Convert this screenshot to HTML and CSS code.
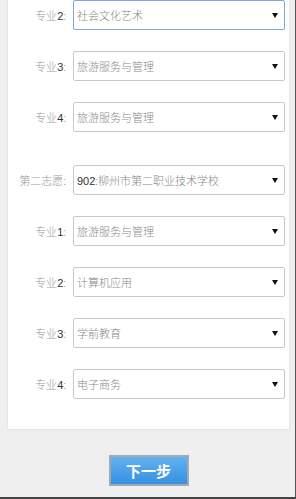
FILE: index.html
```html
<!DOCTYPE html>
<html lang="zh-CN">
  <head>
    <meta charset="UTF-8" />
    <meta name="viewport" content="width=device-width, initial-scale=1.0" />
    <title>志愿填报</title>
    <link rel="stylesheet" href="styles.css">
  </head>
  <body>
    <div class="page">
      <!-- 志愿表单 -->
      <div class="panel">
        <div class="group">
          <div class="row">
            <label class="row-label">专业<span class="num">2</span>:</label>
            <div class="select focus">社会文化艺术<i class="arrow"></i></div>
          </div>
          <div class="row">
            <label class="row-label">专业<span class="num">3</span>:</label>
            <div class="select">旅游服务与管理<i class="arrow"></i></div>
          </div>
          <div class="row">
            <label class="row-label">专业<span class="num">4</span>:</label>
            <div class="select">旅游服务与管理<i class="arrow"></i></div>
          </div>
        </div>

        <div class="group">
          <div class="row">
            <label class="row-label">第二志愿:</label>
            <div class="select"><span class="num">902</span>:柳州市第二职业技术学校<i class="arrow"></i></div>
          </div>
          <div class="row">
            <label class="row-label">专业<span class="num">1</span>:</label>
            <div class="select">旅游服务与管理<i class="arrow"></i></div>
          </div>
          <div class="row">
            <label class="row-label">专业<span class="num">2</span>:</label>
            <div class="select">计算机应用<i class="arrow"></i></div>
          </div>
          <div class="row">
            <label class="row-label">专业<span class="num">3</span>:</label>
            <div class="select">学前教育<i class="arrow"></i></div>
          </div>
          <div class="row">
            <label class="row-label">专业<span class="num">4</span>:</label>
            <div class="select">电子商务<i class="arrow"></i></div>
          </div>
        </div>
      </div>

      <div class="actions">
        <button class="btn-next" type="button">下一步</button>
      </div>
    </div>
  </body>
</html>
```

FILE: styles.css
```css
/* 页面整体 */
body {
  margin: 0;
  font-family: "Noto Sans CJK SC", sans-serif;
  background-color: #efefef;
}
.page {
  box-sizing: border-box;
  height: 499px;
  border-right: 1px solid #555;
  border-bottom: 2px solid #444;
  overflow: hidden;
}

/* 白色面板 */
.panel {
  margin: 0 5px 0 7px;
  padding: 0 4px 30px 0;
  background-color: #fff;
  border: 1px solid #e6e6e6;
  border-top: 0;
}
.group + .group {
  margin-top: 33px;
}
.row {
  display: flex;
  align-items: center;
  height: 30px;
}
.row + .row {
  margin-top: 21px;
}
.row-label {
  width: 65px;
  padding-right: 7px;
  box-sizing: border-box;
  text-align: right;
  font-size: 11px;
  font-weight: 300;
  color: #999;
  white-space: nowrap;
}
.num {
  font-family: "Liberation Sans", Arial, sans-serif;
  font-weight: normal;
  color: #333;
}

/* 下拉框 */
.select {
  position: relative;
  flex: 1;
  height: 30px;
  box-sizing: border-box;
  border: 1px solid #c8c8c8;
  border-radius: 2px;
  padding-left: 3px;
  line-height: 28px;
  font-size: 11px;
  font-weight: 300;
  color: #888;
  white-space: nowrap;
}
.select.focus {
  border-color: #7ea6dd;
}
.arrow {
  position: absolute;
  right: 6px;
  top: 12px;
  width: 0;
  height: 0;
  border-left: 3px solid transparent;
  border-right: 3px solid transparent;
  border-top: 5px solid #111;
}

/* 下一步 按钮 */
.actions {
  display: flex;
  justify-content: center;
  padding-top: 25px;
}
.btn-next {
  width: 80px;
  height: 31px;
  margin-left: 2px;
  border: 2px solid #a3a9b0;
  background: linear-gradient(#62b2ef, #3590e3);
  color: #fff;
  font-family: "Noto Sans CJK SC", sans-serif;
  font-size: 15px;
  font-weight: bold;
  padding: 0;
}
```
